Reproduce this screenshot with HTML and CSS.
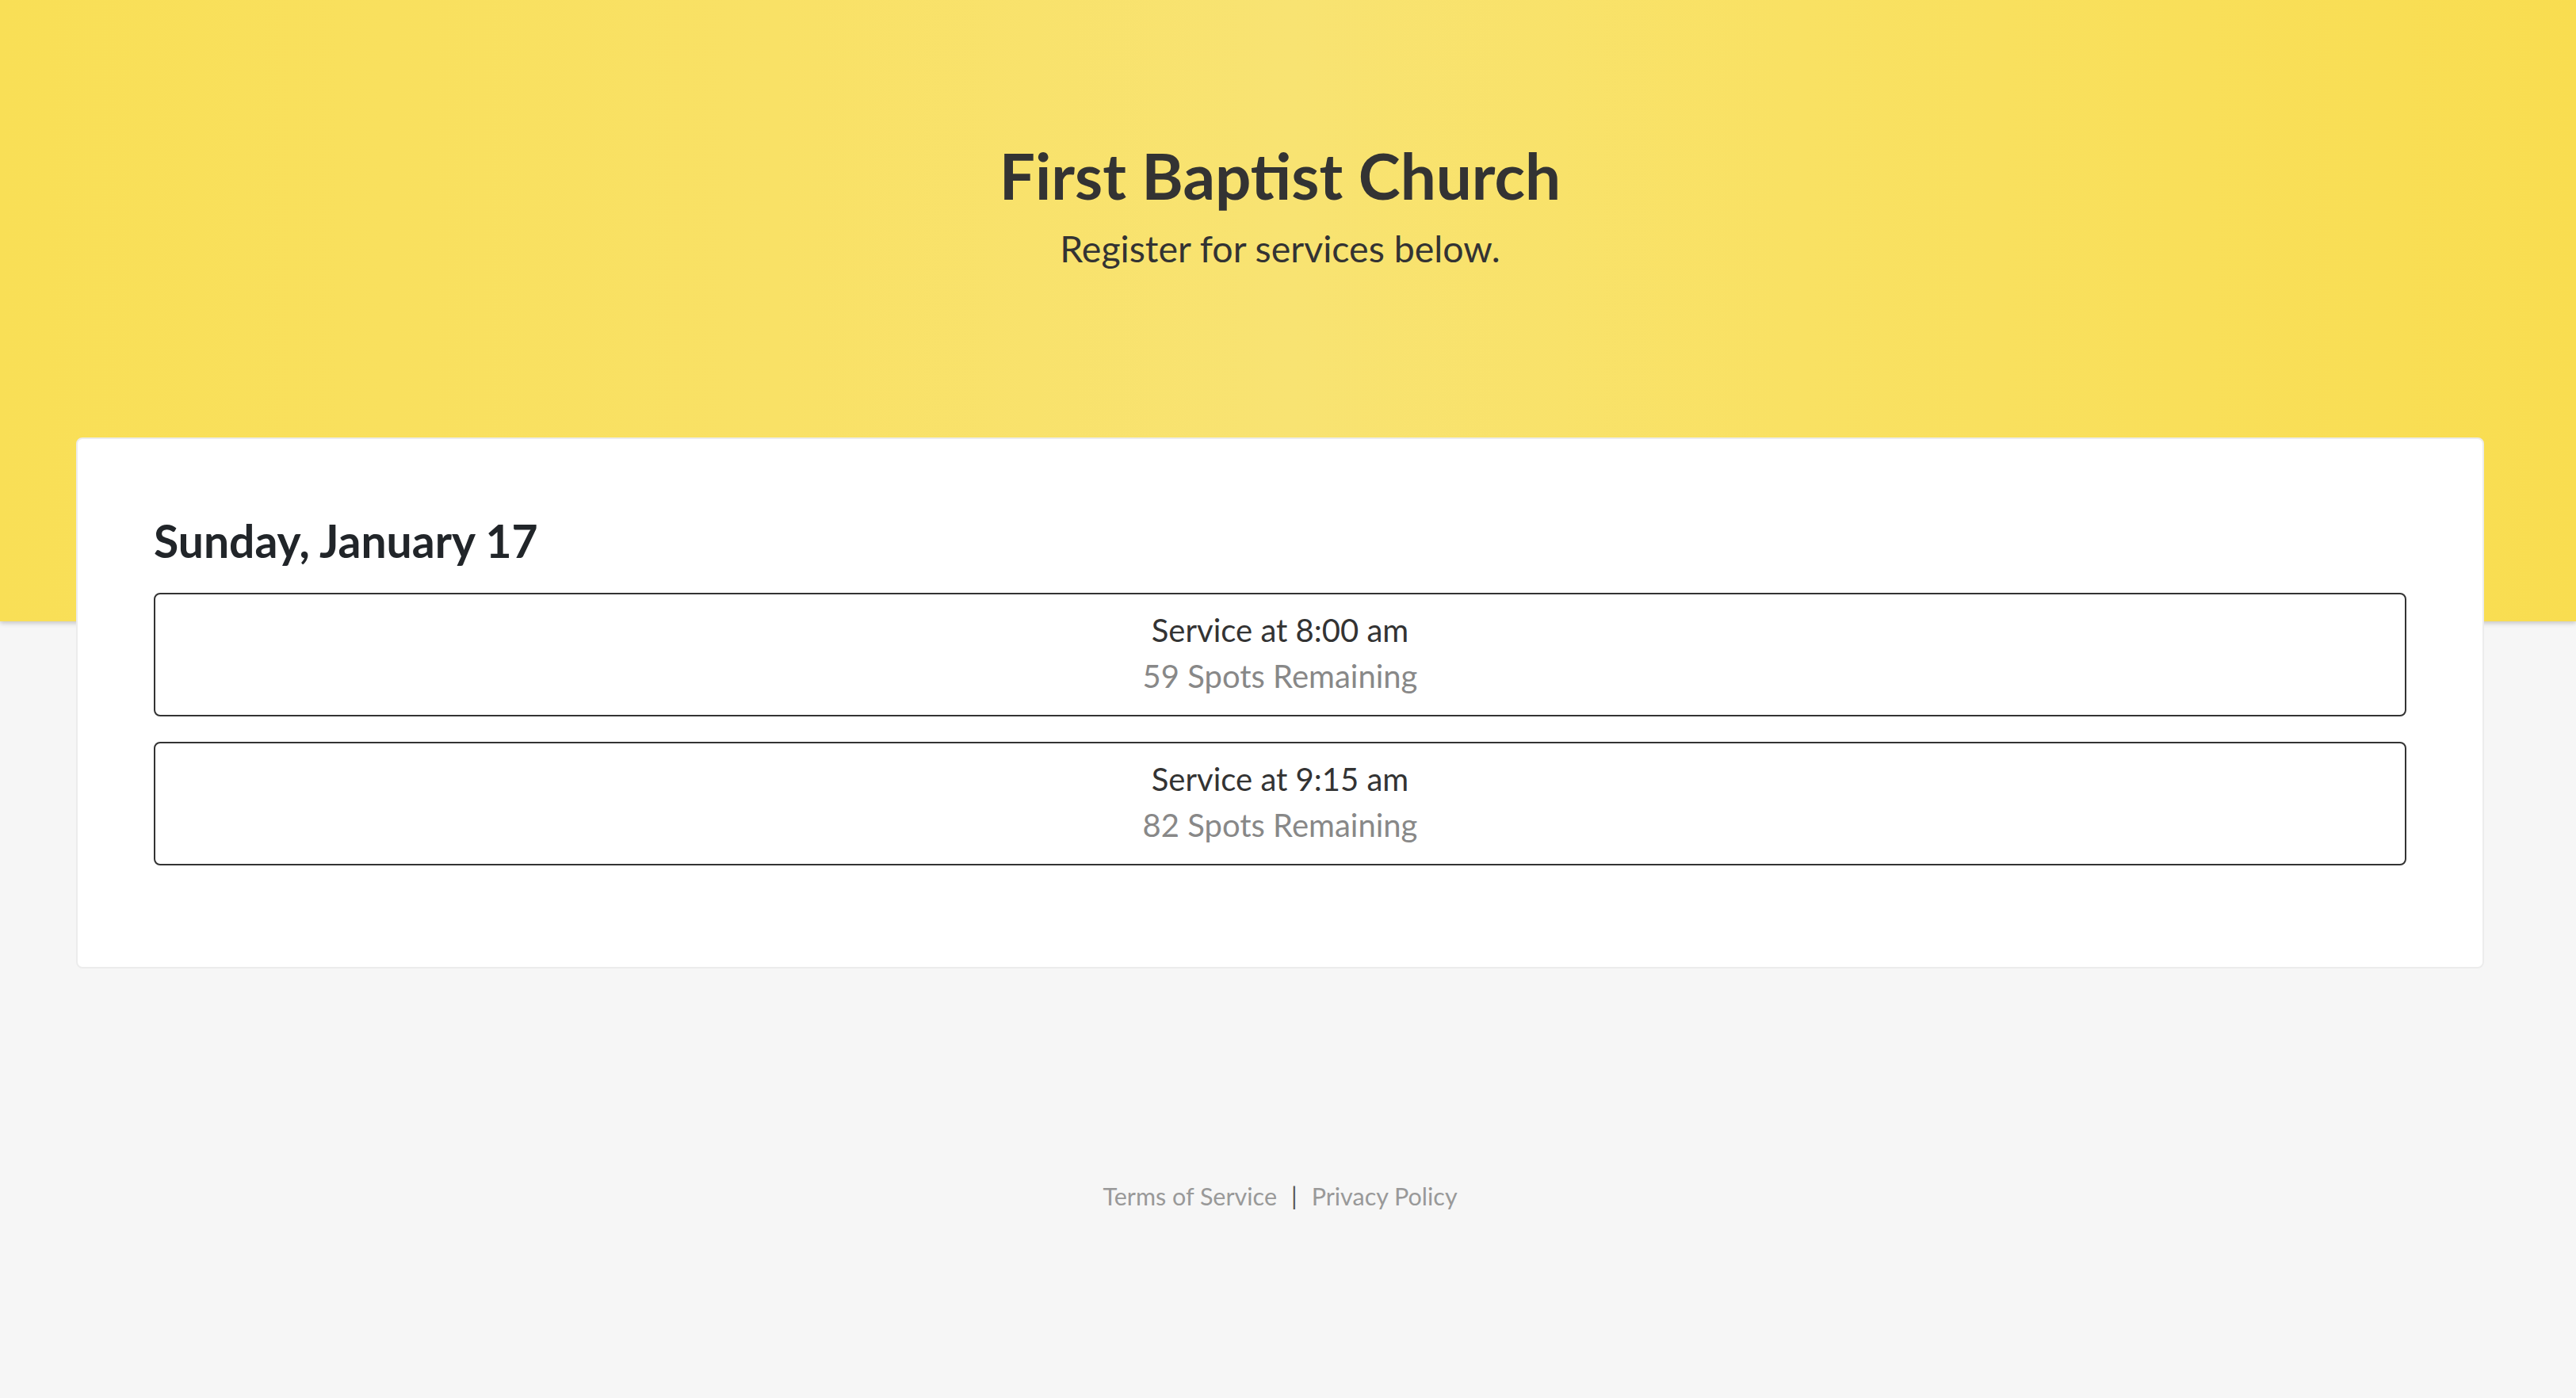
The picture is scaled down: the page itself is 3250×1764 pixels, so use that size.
FILE: index.html
```html
<!DOCTYPE html>
<html lang="en">
<head>
  <meta charset="UTF-8" />
  <meta name="viewport" content="width=device-width, initial-scale=1" />
  <title>First Baptist Church - Service Registration</title>
  <link rel="stylesheet" href="styles.css">
</head>
<body>

<header class="hero">
  <h1>First Baptist Church</h1>
  <p>Register for services below.</p>
</header>

<main class="wrap">
  <div class="card">
    <h2>Sunday, January 17</h2>

    <a class="service" href="#">
      <span class="time">Service at 8:00 am</span>
      <span class="spots">59 Spots Remaining</span>
    </a>

    <a class="service" href="#">
      <span class="time">Service at 9:15 am</span>
      <span class="spots">82 Spots Remaining</span>
    </a>
  </div>
</main>

<footer class="footer">
  <a href="#">Terms of Service</a>
  <span class="sep">|</span>
  <a href="#">Privacy Policy</a>
</footer>

</body>
</html>
```

FILE: styles.css
```css
body {
  margin: 0;
  font-family: Lato, "Noto Sans", Arial, sans-serif;
  background: #f6f6f6;
  color: #333;
  min-height: 100vh;
}
.hero {
  height: 784px;
  box-sizing: border-box;
  padding: 173px 116px 0 96px;
  text-align: center;
  background: linear-gradient(90deg, #f9df56 0%, #f9e166 30%, #f8e372 50%, #f9e163 70%, #f9dd50 100%);
  box-shadow: 0 2px 6px rgba(0,0,0,0.22);
}
.hero h1 {
  margin: 0 0 17px;
  font-size: 80px;
  line-height: 1.2;
  font-weight: 700;
  color: #333;
}
.hero p {
  margin: 0;
  font-size: 46.5px;
  line-height: 1.2;
  color: #333;
}
.wrap {
  padding: 0 116px 0 96px;
  margin-top: -232px;
  position: relative;
}
.card {
  background: white;
  border: 2px solid #ececec;
  border-radius: 8px;
  padding: 94px 96px 96px;
}
.card h2 {
  margin: 0 0 32px;
  font-size: 57px;
  line-height: 1.2;
  font-weight: 700;
  color: #212529;
}
.service {
  display: flex;
  flex-direction: column;
  align-items: center;
  padding: 16px 0 20px;
  margin-bottom: 32px;
  border: 2px solid #333;
  border-radius: 8px;
  text-decoration: none;
  font-size: 40px;
  line-height: 58px;
}
.service .time {
  color: #333;
}
.service .spots {
  color: #888;
}
.footer {
  padding: 269px 116px 0 96px;
  display: flex;
  justify-content: center;
  gap: 18px;
  font-size: 30.5px;
  line-height: 1.2;
}
.footer a {
  color: #999;
  text-decoration: none;
}
.footer .sep {
  color: #555;
}
```
